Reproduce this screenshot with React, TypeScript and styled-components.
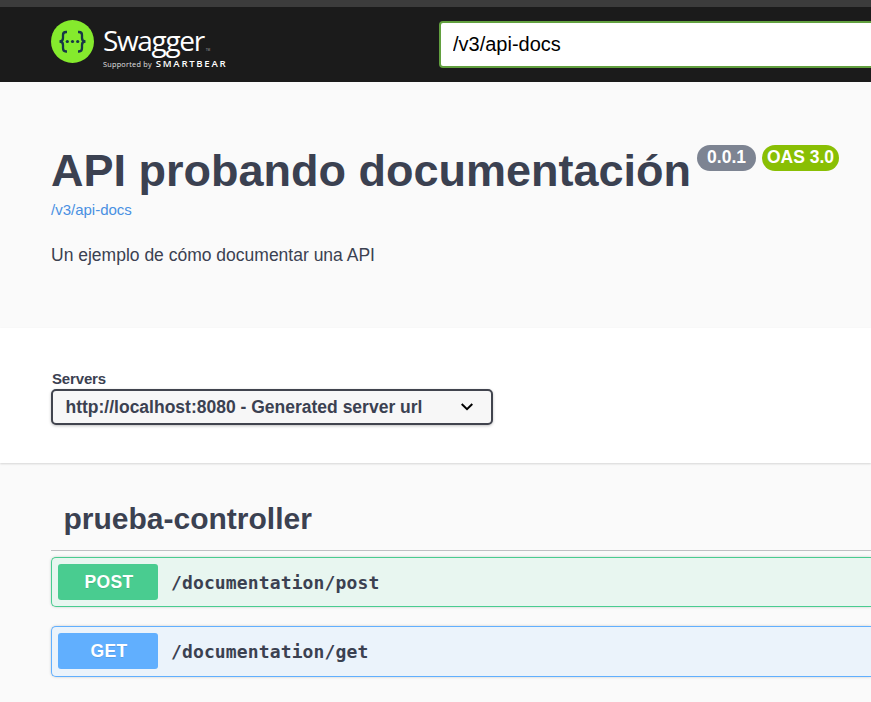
import React from "react";
import styled, { createGlobalStyle } from "styled-components";

const Global = createGlobalStyle`
  * { box-sizing: border-box; }
  html, body { margin: 0; height: 100%; overflow: hidden; background: #fafafa; }
  body { font-family: "Liberation Sans", Arial, sans-serif; color: #3b4151; }
`;

const Page = styled.div`
  height: 702px;
  overflow: hidden;
`;

const Topbar = styled.header`
  height: 82px;
  border-top: 7px solid #3c3c3c;
  background: #1b1b1b;
  display: flex;
  align-items: flex-start;
  padding-left: 51px;
`;

const Logo = styled.a`
  display: flex;
  flex: none;
  width: 388px;
  padding-top: 13px;
  color: #fff;
  font-family: "Open Sans", sans-serif;
`;

const Emblem = styled.svg`
  width: 43px;
  height: 43px;
  flex: none;
`;

const LogoText = styled.div`
  margin-left: 9px;
`;

const Wordmark = styled.div`
  display: flex;
  align-items: baseline;
  height: 38px;
  font-size: 28px;
  line-height: 38px;
  padding-top: 1px;
  letter-spacing: -1.35px;
  white-space: nowrap;
`;

const Trademark = styled.span`
  font-size: 3px;
  letter-spacing: 0;
  margin-left: 2px;
  color: #aaa;
`;

const Tagline = styled.div`
  display: flex;
  align-items: baseline;
  gap: 4px;
  font-size: 7.3px;
  line-height: 12px;
  letter-spacing: 0.24px;
  white-space: nowrap;
  color: #e0e0e0;
`;

const Brand = styled.span`
  font-size: 9.6px;
  font-weight: 600;
  letter-spacing: 1.7px;
  color: #fff;
`;

const UrlInput = styled.input`
  flex: none;
  width: 470px;
  height: 47px;
  margin: 14px 0 0;
  padding: 0 12px 1px;
  border: 2px solid #62a03f;
  border-radius: 4px;
  background: #fff;
  color: #000;
  outline: none;
  font: 20px "Liberation Sans", Arial, sans-serif;
`;

const Info = styled.section`
  height: 246px;
  padding: 62px 0 0 51px;
`;

const TitleRow = styled.div`
  display: flex;
  align-items: flex-start;
`;

const Title = styled.h1`
  margin: 0;
  font-size: 45px;
  line-height: 54px;
  white-space: nowrap;
`;

const Badge = styled.span<{ $bg: string; $width: number; $gap: number }>`
  flex: none;
  width: ${(p) => p.$width}px;
  height: 26px;
  margin: 1px 0 0 ${(p) => p.$gap}px;
  border-radius: 13px;
  background: ${(p) => p.$bg};
  color: #fff;
  font-size: 17.5px;
  font-weight: 700;
  line-height: 24px;
  text-align: center;
  white-space: nowrap;
`;

const SpecLink = styled.a`
  display: block;
  margin-top: 3px;
  color: #4990e2;
  font-size: 15px;
  line-height: 18px;
`;

const Description = styled.p`
  margin: 25px 0 0;
  font-size: 17.5px;
  line-height: 22px;
`;

const Schemes = styled.section`
  height: 135px;
  padding: 42px 0 0 51px;
  background: #fff;
  box-shadow: 0 1px 2px rgba(0, 0, 0, 0.15);
`;

const Label = styled.div`
  margin-left: 1px;
  height: 19px;
  font-size: 15px;
  font-weight: 700;
  line-height: 18px;
  letter-spacing: -0.15px;
`;

const ServerSelect = styled.button`
  display: flex;
  align-items: center;
  justify-content: space-between;
  width: 442px;
  height: 36px;
  padding: 0 18.5px 0 12.5px;
  border: 2px solid #41444e;
  border-radius: 5px;
  background: #f7f7f7;
  box-shadow: 0 1px 3px rgba(0, 0, 0, 0.25);
  color: #3b4151;
  font: 700 17.5px "Liberation Sans", Arial, sans-serif;
`;

const Chevron = styled.svg`
  width: 12px;
  height: 8px;
`;

const Operations = styled.main`
  padding: 25px 0 0 51px;
`;

const Tag = styled.h2`
  height: 63px;
  margin: 0 0 6px;
  padding-left: 12.5px;
  border-bottom: 1px solid #bfc0c3;
  font-size: 30px;
  line-height: 61px;
`;

const Operation = styled.div<{ $color: string; $bg: string; $height: number }>`
  display: flex;
  align-items: flex-start;
  height: ${(p) => p.$height}px;
  margin-bottom: 19px;
  padding: 6px 0 0 6px;
  border: 1px solid ${(p) => p.$color};
  border-right: 0;
  border-radius: 5px 0 0 5px;
  background: ${(p) => p.$bg};
  box-shadow: 0 0 3px rgba(0, 0, 0, 0.19);
`;

const Method = styled.span<{ $color: string }>`
  width: 100px;
  height: 36px;
  border-radius: 3px;
  background: ${(p) => p.$color};
  color: #fff;
  font-size: 17.5px;
  font-weight: 700;
  line-height: 36px;
  letter-spacing: 0.3px;
  padding-left: 2px;
  text-align: center;
  text-shadow: 0 1px 0 rgba(0, 0, 0, 0.1);
`;

const Path = styled.span`
  margin: 7px 0 0 13px;
  font: 700 18px "DejaVu Sans Mono", monospace;
  letter-spacing: 0.13px;
  line-height: 24px;
`;

const operations = [
  { method: "POST", path: "/documentation/post", color: "#49cc90", bg: "#e8f6f0", height: 50 },
  { method: "GET", path: "/documentation/get", color: "#61affe", bg: "#ebf3fb", height: 51 },
];

export default function App() {
  return (
    <Page>
      <Global />
      <Topbar>
        <Logo>
          <Emblem viewBox="0 0 43 43">
            <circle cx="21.5" cy="21.5" r="21.5" fill="#85ea2d" />
            <g fill="none" stroke="#173647" strokeWidth="2.3">
              <path d="M16 12 H15 Q12 12 12 15 V18 Q12 21.5 8.5 21.5 Q12 21.5 12 25 V28 Q12 31.5 15 31.5 H16" />
              <path d="M27 12 H28 Q31 12 31 15 V18 Q31 21.5 34.5 21.5 Q31 21.5 31 25 V28 Q31 31.5 28 31.5 H27" />
            </g>
            <g fill="#173647">
              <circle cx="16.3" cy="21.5" r="1.6" />
              <circle cx="21.5" cy="21.5" r="1.6" />
              <circle cx="26.7" cy="21.5" r="1.6" />
            </g>
          </Emblem>
          <LogoText>
            <Wordmark>Swagger<Trademark>TM</Trademark></Wordmark>
            <Tagline>Supported by <Brand>SMARTBEAR</Brand></Tagline>
          </LogoText>
        </Logo>
        <UrlInput defaultValue="/v3/api-docs" />
      </Topbar>
      <Info>
        <TitleRow>
          <Title>API probando documentación</Title>
          <Badge $bg="#7d8492" $width={59} $gap={6}>0.0.1</Badge>
          <Badge $bg="#89bf04" $width={77} $gap={6}>OAS 3.0</Badge>
        </TitleRow>
        <SpecLink>/v3/api-docs</SpecLink>
        <Description>Un ejemplo de cómo documentar una API</Description>
      </Info>
      <Schemes>
        <Label>Servers</Label>
        <ServerSelect>
          http://localhost:8080 - Generated server url
          <Chevron viewBox="0 0 12 8" fill="none" stroke="#000" strokeWidth="2">
            <path d="M0.7 1 L6 6.2 L11.3 1" />
          </Chevron>
        </ServerSelect>
      </Schemes>
      <Operations>
        <Tag>prueba-controller</Tag>
        {operations.map((op) => (
          <Operation key={op.path} $color={op.color} $bg={op.bg} $height={op.height}>
            <Method $color={op.color}>{op.method}</Method>
            <Path>{op.path}</Path>
          </Operation>
        ))}
      </Operations>
    </Page>
  );
}
